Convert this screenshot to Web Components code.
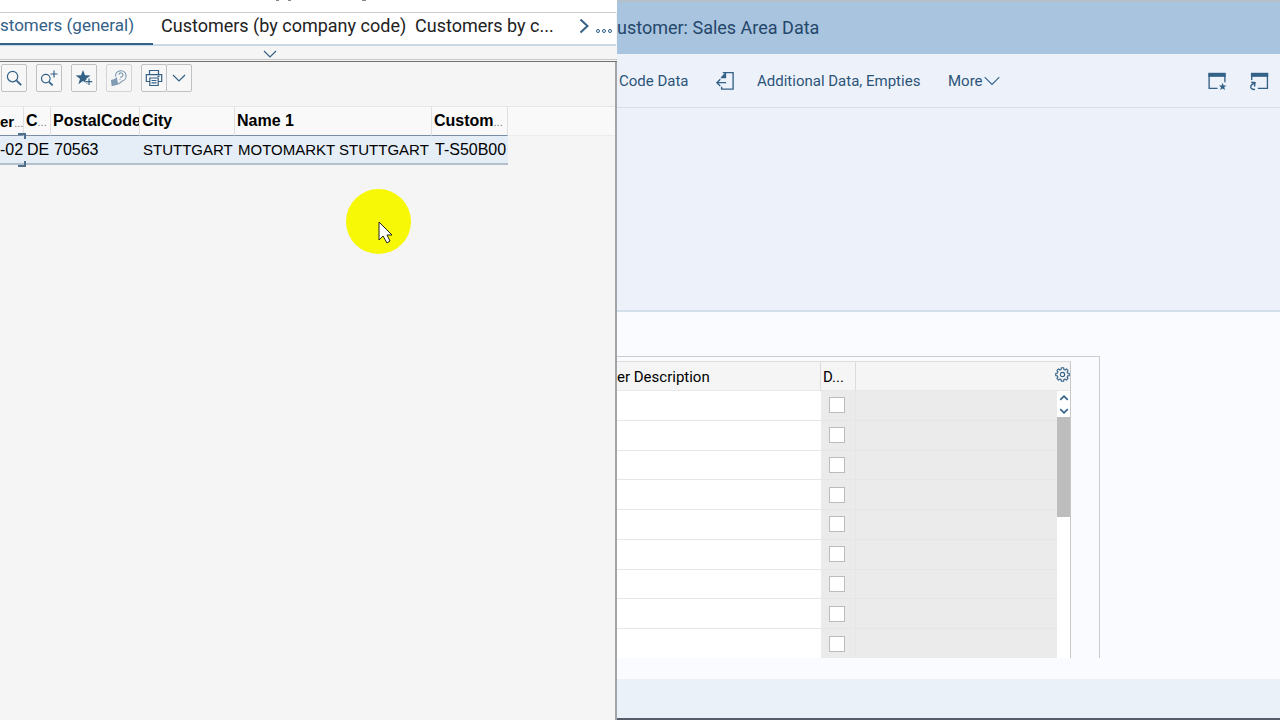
<!DOCTYPE html>
<html lang="en">
<head>
<meta charset="utf-8">
<title>Customer: Sales Area Data</title>
<style>
html,body{margin:0;height:100%}
body{font-family:Roboto,"Noto Sans",sans-serif;font-size:15px;color:#111;background:#f9fbff}
</style>
</head>
<body>
<sap-workspace>
  <search-dialog slot="dialog"></search-dialog>
  <customer-page></customer-page>
</sap-workspace>
<script>
const icons = {
  search: '<circle cx="6.600" cy="6.600" r="5.200"/><path d="M10.600 10.600 15.200 15.200" stroke-width="1.800"/>',
  searchPlus: '<circle cx="4.800" cy="8.600" r="4.300"/><path d="M8 11.800 11.600 15.400" stroke-width="1.800"/><path d="M13 .5v7M9.500 4h7"/>',
  starPlus: '<path fill="currentColor" stroke="none" d="M7 0 9 5.3 14.6 5.4 10.2 8.8 11.8 14.2 7 11 2.4 14.2 4 8.8-.4 5.4 5 5.3Z"/><path d="M13 8v7M9.5 11.5h7" stroke="#f5f5f5" stroke-width="3"/><path d="M13 8.5v6.5M9.8 11.7h6.4"/>',
  help: '<path d="M4.5 6.5A5.3 5.3 0 1 1 11 11.2L7.4 14"/><path d="M8 4.6a2 2 0 1 1 2.3 2.2L9.4 8M9 9.3v.8"/><path fill="currentColor" d="M5.3 8.2 6.6 14 1.2 15.4.6 10.4 3.8 9.6Z"/>',
  print: '<path d="M3.500 4.500V.5h9v4M3.500 11.500H.3V4.600h15.400v6.900h-3.200M3.800 8h8.400v7.500H3.800ZM5.500 10.500h5M5.500 12.800h5M11.500 6.300h2"/>',
  down: '<path d="M2 5 8 11 14 5"/>',
  wideDown: '<path d="M1.500 4.500 8 11 14.500 4.500"/>',
  up: '<path d="M2 11 8 5 14 11"/>',
  right: '<path d="M4.500 1.500 11.500 8 4.500 14.500"/>',
  dots: '<circle cx="2" cy="8" r="1.500"/><circle cx="8" cy="8" r="1.500"/><circle cx="14" cy="8" r="1.500"/>',
  back: '<path d="M6 .6h9.200v14.600H5v-2M9 9.500H.8M3.800 6.500.8 9.500 3.800 12.500"/><path fill="currentColor" d="M9 .6v5H4.200V4.800L8 .6Z" stroke="none"/>',
  favWindow: '<path d="M8.500 14.500H1V2h14v7"/><path d="M.3 2.500h15.400" stroke-width="3.600"/><path fill="currentColor" stroke="none" d="m13 9.600.9 2.500h2.500l-2 1.500.8 2.500-2.200-1.500-2.200 1.500.8-2.500-2-1.500h2.500Z"/>',
  newWindow: '<path d="M1.500 7V2H15.500v12.500H7"/><path d="M.8 2.500h15.400" stroke-width="3.600"/><path d="M4.500 15.500C-.5 16-.5 11.500 3.800 10M1 9l3.500.5L4 13"/>'
};
// Eight-lobed cog outline
icons.gear = (() => {
  const p = [];
  for (let i = 0; i < 8; i++) {
    [[-15, 5.6], [-10, 7.3], [10, 7.3], [15, 5.6]].forEach(([a, r]) => {
      const t = (i * 45 + a) * Math.PI / 180;
      p.push((8 + r * Math.sin(t)).toFixed(2) + ' ' + (8 - r * Math.cos(t)).toFixed(2));
    });
  }
  return `<circle cx="8" cy="8" r="2.300"/><path stroke-linejoin="round" d="M${p.join('L')}Z"/>`;
})();
class BaseElement extends HTMLElement {
  constructor(){ super(); this.attachShadow({mode:'open'}); }
  render(css, html){ this.shadowRoot.innerHTML = `<style>*{box-sizing:border-box}${css}</style>${html}`; }
}
customElements.define('sap-workspace', class extends BaseElement {
  connectedCallback(){ this.render(`
    :host{display:grid;grid-template-columns:617fr 663fr;min-height:100vh}
    ::slotted(*){min-width:0}`, '<slot name="dialog"></slot><slot></slot>'); }
});
customElements.define('sap-icon', class extends BaseElement {
  connectedCallback(){
    this.render(`:host{display:inline-flex;flex:none;width:var(--size,16px);height:var(--size,16px);color:var(--icon,#346187)}
    svg{width:100%;height:100%;overflow:visible;fill:none;stroke:currentColor;stroke-width:var(--stroke,1.2)}`,
    `<svg viewBox="0 0 16 16" aria-hidden="true">${icons[this.getAttribute('name')]}</svg>`);
  }
});
customElements.define('tool-button', class extends BaseElement {
  connectedCallback(){ this.render(`
    :host{display:block}
    button{display:flex;align-items:center;justify-content:center;width:26px;height:28px;padding:0;border:1px solid #c1c1c4;border-radius:2px;background:#f7f7f7}
    :host([disabled]) button{opacity:.6}
    :host([joined]) button{margin-left:-1px}`,
    `<button type="button" aria-label="${this.getAttribute('label')}"><slot></slot></button>`); }
});
customElements.define('search-tabs', class extends BaseElement {
  connectedCallback(){ this.render(`
    :host{display:flex;height:34px;margin-right:1px;background:#fff;border-top:1px solid #cbcbcb;border-bottom:2px solid #c9d8e5;font-size:18px}
    button{font:inherit;color:#222;border:0;background:none;padding:0;height:32px;line-height:24px;white-space:nowrap;text-align:left}
    .tab{padding-bottom:6px;margin-right:8px}
    .active{color:#346187;border-bottom:2px solid #346187;width:153px;font-size:17px}
    .by{width:246px}
    .nav{margin-left:auto;display:flex;align-items:flex-start;gap:4px;padding-right:4px}
    .nav button{display:flex;height:26px;align-items:center}
    .nav .all{height:36px}`,
    `<button class="tab active" type="button">stomers (general)</button>
     <button class="tab by" type="button">Customers (by company code)</button>
     <button class="tab" type="button">Customers by c...</button>
     <div class="nav"><button type="button" aria-label="Next tabs"><sap-icon name="right" style="--stroke:2"></sap-icon></button>
     <button class="all" type="button" aria-label="All tabs"><sap-icon name="dots" style="--stroke:1"></sap-icon></button></div>`); }
});
customElements.define('result-table', class extends BaseElement {
  connectedCallback(){ this.render(`
    :host{display:block;border-top:1px solid #e6e6e6;background:linear-gradient(#f9f9f9 0 28px,#ececec 28px 29px,transparent 29px);font-family:"Liberation Sans",Arial,sans-serif;font-size:16px;color:#000}
    table{border-collapse:separate;border-spacing:0;table-layout:fixed;width:508px}
    th,td{height:29px;padding:0 0 0 2px;text-align:left;white-space:nowrap;overflow:hidden}
    th{font-weight:700;border-right:1px solid #e0e0e0;border-bottom:1px solid #7b8da2}
    td{background:#e5eef7;border-bottom:2px solid #b3bfca;padding-left:3px}
    .name{font-size:15px}
    th:first-child,td:first-child{padding-left:0}
    th:first-child{font-size:15px}
    small{font-size:11px;font-weight:400;color:#777}
    .focus{position:relative;overflow:visible}
    .focus::after{content:"";position:absolute;right:-2px;top:-3px;width:6px;height:34px;border-right:2px solid #4f6f8e;background:linear-gradient(#4f6f8e 0 0) top/100% 2px no-repeat,linear-gradient(#4f6f8e 0 0) bottom/100% 2px no-repeat;clip-path:polygon(0 0,100% 0,100% 6px,0 6px,0 28px,100% 28px,100% 100%,0 100%)}`,
    `<table><colgroup><col style="width:24px"><col style="width:27px"><col style="width:89px"><col style="width:95px"><col style="width:197px"><col></colgroup>
    <thead><tr><th>er<small>...</small></th><th>C<small>...</small></th><th>PostalCode</th><th>City</th><th>Name 1</th><th>Custom<small>...</small></th></tr></thead>
    <tbody><tr><td class="focus">-02</td><td>DE</td><td>70563</td><td class="name">STUTTGART</td><td class="name">MOTOMARKT STUTTGART</td><td>T-S50B00</td></tr></tbody></table>`); }
});
customElements.define('pointer-spot', class extends BaseElement {
  connectedCallback(){ this.render(`
    :host{position:absolute;left:346px;top:189px;width:65px;height:65px;border-radius:50%;background:#f6f805}
    svg{display:block;width:100%;height:100%}`,
    `<svg viewBox="0 0 65 65" aria-hidden="true"><path d="M33 33v18l4-4 4 7 3-2-3-6h5Z" fill="#fff" stroke="#222" stroke-width="1"/></svg>`); }
});
customElements.define('search-dialog', class extends BaseElement {
  connectedCallback(){ this.render(`
    :host{display:flex;flex-direction:column;position:relative;background:#f5f5f5;overflow:hidden}
    header{height:12px;background:#fff}
    header svg{display:block}
    .collapse{display:flex;flex:none;align-items:center;justify-content:center;width:100%;height:16px;padding:0 78px 0 0;border:0;border-bottom:1px solid #707070;background:linear-gradient(#f5f5f5 0 13px,#c8c8c8 13px 14px,#f5f5f5 14px)}
    .content{flex:1;border-right:2px solid #a1a4a8}
    .tools{display:flex;gap:9px;padding:2px 0 14px 1px}
    .print{display:flex}`,
    `<header><svg width="400" height="2" aria-hidden="true"><path d="M276 0h3v1h-3zM288 0h3v1h-3zM362 0h4v1h-4z" fill="#888"/></svg></header><search-tabs></search-tabs>
    <button class="collapse" type="button" aria-label="Expand search criteria"><sap-icon name="down" style="--stroke:1.2"></sap-icon></button>
    <div class="content"><div class="tools">
      <tool-button label="Find"><sap-icon name="search"></sap-icon></tool-button>
      <tool-button label="Find next"><sap-icon name="searchPlus"></sap-icon></tool-button>
      <tool-button label="Add to favorites"><sap-icon name="starPlus"></sap-icon></tool-button>
      <tool-button label="Help" disabled><sap-icon name="help"></sap-icon></tool-button>
      <div class="print"><tool-button label="Print"><sap-icon name="print"></sap-icon></tool-button><tool-button joined label="Print options"><sap-icon name="down"></sap-icon></tool-button></div>
    </div>
    <result-table></result-table></div><pointer-spot></pointer-spot>`); }
});
customElements.define('page-toolbar', class extends BaseElement {
  connectedCallback(){ this.render(`
    :host{display:flex;align-items:center;height:54px;padding-right:12px;background:#edf2fa;border-bottom:1px solid #d5dfe9}
    button{display:flex;align-items:center;height:28px;border:0;background:none;padding:0;font:inherit;color:#2c5478;white-space:nowrap}
    .code{width:99px;padding-left:2px}.back{width:41px}.add{width:191px}.end{display:flex;gap:24px;margin-left:auto}`,
    `<button type="button" class="code">Code Data</button>
    <button type="button" class="back" aria-label="Leave"><sap-icon name="back" style="--size:18px"></sap-icon></button>
    <button type="button" class="add">Additional Data, Empties</button>
    <button type="button">More<sap-icon name="wideDown" style="--size:18px;--stroke:1"></sap-icon></button>
    <div class="end"><button type="button" aria-label="Favorite window"><sap-icon name="favWindow" style="--size:18px"></sap-icon></button>
    <button type="button" aria-label="New window"><sap-icon name="newWindow" style="--size:18px"></sap-icon></button></div>`); }
});
customElements.define('description-table', class extends BaseElement {
  connectedCallback(){
    const rows = Array.from({length:9},(_,i)=>`<tr><td></td><td class="mark"><input type="checkbox" aria-label="Delete row ${i+1}"></td><td class="fill"></td></tr>`).join('');
    this.render(`
    :host{display:block;width:483px;max-width:100%;height:302px;padding-top:4px;border:1px solid #c9ccd0;border-left:0;border-bottom:0}
    .grid{position:relative;width:454px;height:297px;border-top:1px solid #dcdcdc;border-right:1px solid #c8c8c8;overflow:hidden;background:#fff}
    table{border-collapse:separate;border-spacing:0;table-layout:fixed;width:100%;height:297px;color:#000}
    th{height:29px;padding:2px 0 0 2px;font-weight:400;text-align:left;background:#f5f5f5;border-right:1px solid #dcdcdc;border-bottom:1px solid #e8e8e8;white-space:nowrap}
    th:first-child{padding-left:0}th:last-child{border-right:0}
    td{padding:0;border-bottom:1px solid #e6e6e6}
    .mark,.fill{background:#ebebeb;border-bottom-color:#e6e6e6}.mark{border-right:1px solid #e6e6e6}
    input{appearance:none;display:block;width:16px;height:16px;margin:0 0 0 8px;border:1px solid #bcbcbc;background:#fff}
    .settings{position:absolute;right:0;top:5px;display:flex;border:0;padding:0;background:none}
    .scroll{position:absolute;right:0;top:29px;bottom:0;width:13px;background:#fff}
    .scroll button{display:flex;justify-content:center;align-items:center;width:13px;height:13px;padding:0;border:0;background:none}
    .thumb{height:100px;background:#bdbdbd}`,
    `<div class="grid"><table><colgroup><col style="width:204px"><col style="width:35px"><col></colgroup>
    <thead><tr><th>er Description</th><th>D...</th><th></th></tr></thead><tbody>${rows}</tbody></table>
    <button class="settings" type="button" aria-label="Table settings"><sap-icon name="gear" style="--size:15px"></sap-icon></button>
    <div class="scroll"><button type="button" aria-label="Scroll up"><sap-icon name="up" style="--size:10px;--stroke:2.6"></sap-icon></button><button type="button" aria-label="Scroll down"><sap-icon name="down" style="--size:10px;--stroke:2.6"></sap-icon></button><div class="thumb"></div></div></div>`);
  }
});
customElements.define('customer-page', class extends BaseElement {
  connectedCallback(){ this.render(`
    :host{display:flex;flex-direction:column;background:#f9fbff;overflow:hidden}
    h1{margin:0;height:54px;line-height:52px;font-size:18px;font-weight:400;color:#24476b;background:#a9c4de;border-top:2px solid #b5bfc9;white-space:nowrap}
    .head{height:204px;background:#edf2fa;border-bottom:2px solid #d2e0eb}
    main{flex:1;padding:44px 0 20px}
    footer{height:41px;background:#ebf1f9;border-bottom:2px solid #555d68}`,
    `<h1>ustomer: Sales Area Data</h1><page-toolbar></page-toolbar><div class="head"></div><main><description-table></description-table></main><footer></footer>`); }
});
</script>
</body>
</html>
